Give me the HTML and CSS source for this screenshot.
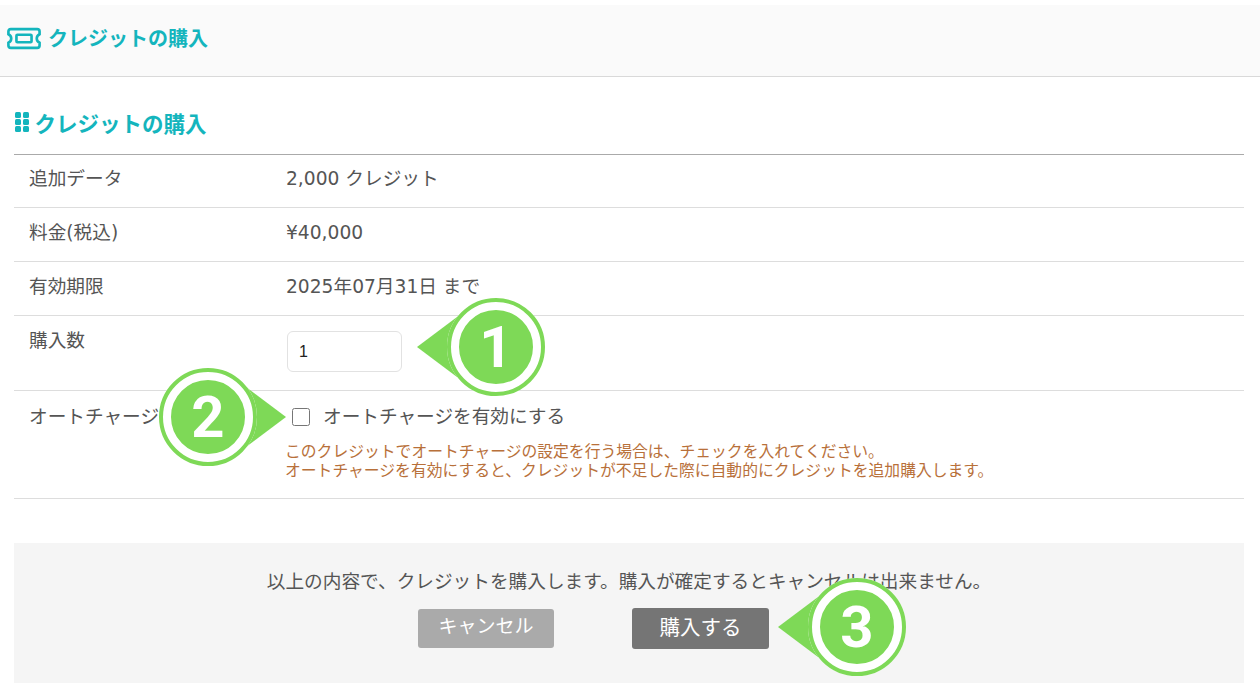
FILE: index.html
```html
<!DOCTYPE html>
<html lang="ja">
<head>
    <meta charset="UTF-8">
    <meta name="viewport" content="width=device-width, initial-scale=1.0">
    <title>クレジットの購入</title>
    <link rel="stylesheet" href="styles.css">
</head>
<body>

    <header class="page-header">
        <svg class="ticket-icon" width="34" height="23" viewBox="0 0 36 24" fill="none" stroke="currentColor" stroke-width="2.8">
            <path d="M4 2h28q2.500 0 2.500 2.500v3q-3 1.500 -3 4.500t3 4.500v3q0 2.500-2.500 2.500h-28q-2.500 0-2.500-2.500v-3q3-1.500 3-4.500t-3-4.500v-3q0-2.500 2.500-2.500z"/>
            <rect x="10" y="8" width="16" height="8" rx="1"/>
        </svg>
        <span>クレジットの購入</span>
    </header>

    <main class="content">
        <h2 class="section-title">
            <span class="dots"><i></i><i></i><i></i><i></i><i></i><i></i></span>
            クレジットの購入
        </h2>

        <div class="rows">
            <div class="row"><div class="label">追加データ</div><div class="value">2,000 クレジット</div></div>
            <div class="row"><div class="label">料金(税込)</div><div class="value">¥40,000</div></div>
            <div class="row"><div class="label">有効期限</div><div class="value">2025年07月31日 まで</div></div>
            <div class="row row-qty">
                <div class="label">購入数</div>
                <div class="value"><input class="qty" type="text" value="1"></div>
            </div>
            <div class="row row-charge">
                <div class="label">オートチャージ</div>
                <div class="value">
                    <label class="check"><input type="checkbox"> オートチャージを有効にする</label>
                    <p class="note">このクレジットでオートチャージの設定を行う場合は、チェックを入れてください。<br>オートチャージを有効にすると、クレジットが不足した際に自動的にクレジットを追加購入します。</p>
                </div>
            </div>
        </div>

        <div class="confirm">
            <p>以上の内容で、クレジットを購入します。購入が確定するとキャンセルは出来ません。</p>
            <div class="buttons">
                <button class="btn btn-cancel">キャンセル</button>
                <button class="btn btn-buy">購入する</button>
            </div>
        </div>
    </main>

    <!-- 手順の吹き出し -->
    <div class="callout callout-1"><span class="arrow arrow-left"></span><span class="badge">1</span></div>
    <div class="callout callout-2"><span class="arrow arrow-right"></span><span class="badge">2</span></div>
    <div class="callout callout-3"><span class="arrow arrow-left"></span><span class="badge">3</span></div>

</body>
</html>
```

FILE: styles.css
```css
body {
    font-family: "DejaVu Sans", "Noto Sans CJK JP", sans-serif;
    margin: 0;
    padding-top: 5px;
    height: 678px;
    overflow: hidden;
    background-color: #fff;
    color: #555;
    font-size: 18.67px;
    position: relative;
}
.page-header {
    height: 64px;
    background: #fafafa;
    border-bottom: 1px solid #d9d9d9;
    display: flex;
    align-items: center;
    gap: 7px;
    padding: 0 0 7px 7px;
    color: #14b5bd;
    font-family: "Noto Sans CJK JP", sans-serif;
    font-size: 20px;
    font-weight: 700;
}
.ticket-icon {
    color: #14b5bd;
    margin-top: 3px;
}
.content {
    padding: 0 16px 0 14px;
}
.section-title {
    margin: 0;
    height: 78px;
    padding-top: 13px;
    box-sizing: border-box;
    display: flex;
    align-items: center;
    gap: 6px;
    color: #14b5bd;
    font-family: "Noto Sans CJK JP", sans-serif;
    font-size: 21.5px;
    font-weight: 700;
    border-bottom: 1px solid #aaa;
}
.dots {
    display: grid;
    grid-template-columns: 6px 6px;
    gap: 1.500px;
    margin-left: 1px;
}
.dots i {
    width: 6px;
    height: 5.500px;
    background: #14b5bd;
    border-radius: 1.500px;
}
.row {
    display: flex;
    height: 54px;
    box-sizing: border-box;
    padding: 0 0 2px 15px;
    align-items: center;
    border-bottom: 1px solid #ddd;
    line-height: 1.3;
}
.row:first-child {
    height: 53px;
    padding-bottom: 4px;
}
.row-qty {
    height: 75px;
    align-items: flex-start;
    padding: 13px 0 0 15px;
}
.row-charge {
    height: 108px;
    align-items: flex-start;
    padding: 14px 0 0 15px;
}
.label {
    width: 257px;
    flex-shrink: 0;
}
.qty {
    display: block;
    width: 115px;
    height: 41px;
    box-sizing: border-box;
    margin: 2px 0 0 1px;
    padding: 0 11px;
    border: 1.500px solid #e2e2e2;
    border-radius: 6px;
    font-family: "Liberation Sans", sans-serif;
    font-size: 16px;
    color: #222;
}
.check {
    display: flex;
    align-items: center;
    gap: 13px;
}
.check input {
    width: 18px;
    height: 18px;
    margin: 0 0 0 6px;
}
.note {
    margin: 13px 0 0 -1px;
    color: #b8703a;
    font-size: 15.8px;
    line-height: 19px;
}
.confirm {
    margin-top: 44px;
    height: 140px;
    background: #f5f5f5;
    text-align: center;
    padding-top: 26px;
    box-sizing: border-box;
}
.confirm p {
    margin: 0 0 13px;
    line-height: 26px;
}
.buttons {
    display: flex;
    justify-content: center;
    gap: 78px;
    align-items: center;
    padding-right: 71px;
}
.btn {
    border: none;
    border-radius: 3px;
    color: #fff;
    font-family: inherit;
    padding: 0 0 5px;
    cursor: pointer;
}
.btn-cancel {
    width: 136px;
    height: 39px;
    padding-bottom: 9px;
    font-size: 19px;
    background: #aaa;
}
.btn-buy {
    width: 137px;
    height: 41px;
    font-size: 20.5px;
    background: #757575;
}
.callout {
    position: absolute;
    width: 98px;
    height: 98px;
}
.callout-1 { left: 447px; top: 298px; }
.callout-2 { left: 159px; top: 368px; }
.callout-3 { left: 808px; top: 578px; }
.badge {
    position: absolute;
    inset: 0;
    box-sizing: border-box;
    border-radius: 50%;
    background: #7ed957;
    border: 12px solid #fff;
    outline: 4px solid #7ed957;
    outline-offset: -4px;
    color: #fff;
    font-family: Roboto, sans-serif;
    font-weight: 700;
    font-size: 58px;
    line-height: 74px;
    text-align: center;
}
.arrow {
    position: absolute;
    top: 19px;
    width: 0;
    height: 0;
    border-top: 30px solid transparent;
    border-bottom: 30px solid transparent;
}
.arrow-left {
    left: -30px;
    border-right: 40px solid #7ed957;
}
.arrow-right {
    right: -29px;
    border-left: 40px solid #7ed957;
}
```
